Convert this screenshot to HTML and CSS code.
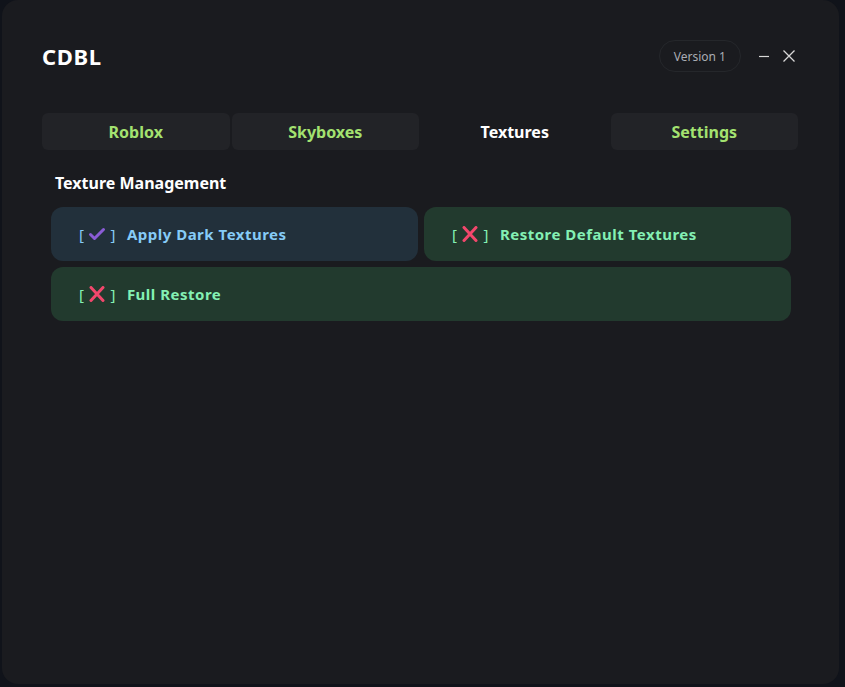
FILE: index.html
```html
<!DOCTYPE html>
<html>
<head>
<meta charset="utf-8">
<link rel="stylesheet" href="styles.css">
</head>
<body>
<div class="window">
  <div class="header">
    <div class="title">CDBL</div>
    <div class="controls">
      <div class="version">Version 1</div>
      <svg class="ctl min" width="12" height="14" viewBox="0 0 12 14"><path d="M1 7.5H11" stroke="#d8d8d8" stroke-width="1.2"/></svg>
      <svg class="ctl close" width="14" height="14" viewBox="0 0 14 14"><path d="M1.5 1.5L12.5 12.5M12.5 1.5L1.5 12.5" stroke="#d8d8d8" stroke-width="1.3"/></svg>
    </div>
  </div>
  <div class="tabs">
    <div class="tab">Roblox</div>
    <div class="tab">Skyboxes</div>
    <div class="tab active">Textures</div>
    <div class="tab">Settings</div>
  </div>
  <div class="section">
    <div class="section-title">Texture Management</div>
    <div class="grid">
      <div class="btn blue"><span class="br">[</span><svg class="ico" width="18" height="16" viewBox="0 0 18 16"><path d="M2.5 8.5L6.5 12.5L15.5 3.5" fill="none" stroke="#8a5cd6" stroke-width="3" stroke-linecap="round" stroke-linejoin="round"/></svg><span class="br">]</span><span class="label">Apply Dark Textures</span></div>
      <div class="btn green"><span class="br">[</span><svg class="ico" width="18" height="16" viewBox="0 0 18 16"><path d="M3 1.5L15 14.5M15 1.5L3 14.5" stroke="#f2476c" stroke-width="3" stroke-linecap="round"/></svg><span class="br">]</span><span class="label">Restore Default Textures</span></div>
      <div class="btn green wide"><span class="br">[</span><svg class="ico" width="18" height="16" viewBox="0 0 18 16"><path d="M3 1.5L15 14.5M15 1.5L3 14.5" stroke="#f2476c" stroke-width="3" stroke-linecap="round"/></svg><span class="br">]</span><span class="label">Full Restore</span></div>
    </div>
  </div>
</div>
</body>
</html>
```
FILE: styles.css
```css
html, body {
  margin: 0;
  padding: 0;
  background: #10131a;
  font-family: "Noto Sans", "Open Sans", sans-serif;
}
.window {
  margin-left: 2px;
  width: 837px;
  height: 684px;
  box-sizing: border-box;
  background: #1a1b1f;
  border-radius: 16px;
  padding: 40px 41px 0 40px;
}
.header {
  display: flex;
  justify-content: space-between;
  align-items: center;
  height: 32px;
}
.title {
  color: #ffffff;
  font-weight: 700;
  font-size: 22px;
  letter-spacing: 0.6px;
}
.controls {
  display: flex;
  align-items: center;
  margin-right: 2px;
}
.version {
  height: 32px;
  box-sizing: border-box;
  padding: 0 14px;
  border: 1px solid #25272b;
  border-radius: 16px;
  color: #a9acb3;
  font-size: 12px;
  display: flex;
  align-items: center;
  margin-right: 17px;
}
.ctl.min {
  margin-right: 12px;
}
.tabs {
  margin-top: 41px;
  display: grid;
  grid-template-columns: repeat(4, 1fr);
  gap: 2px;
}
.tab {
  height: 37px;
  border-radius: 6px;
  background: #222327;
  color: #a4e270;
  font-weight: 700;
  font-size: 16px;
  display: flex;
  align-items: center;
  justify-content: center;
}
.tab.active {
  background: transparent;
  color: #ffffff;
}
.section {
  padding: 0 7px 0 9px;
}
.section-title {
  margin-top: 22px;
  padding-left: 4px;
  color: #ffffff;
  font-weight: 700;
  font-size: 16px;
  height: 22px;
  line-height: 22px;
}
.grid {
  margin-top: 13px;
  display: grid;
  grid-template-columns: 1fr 1fr;
  gap: 6px;
}
.btn {
  height: 54px;
  border-radius: 12px;
  display: flex;
  align-items: center;
  padding-left: 28px;
  font-weight: 700;
  font-size: 15px;
  letter-spacing: 0.5px;
}
.btn.wide {
  grid-column: 1 / 3;
}
.blue {
  background: #22303b;
  color: #86cbf7;
}
.green {
  background: #223a2e;
  color: #84f0b4;
}
.br {
  font-weight: 400;
}
.ico {
  margin: 0 4px 0 4px;
}
.label {
  margin-left: 11px;
}
```
